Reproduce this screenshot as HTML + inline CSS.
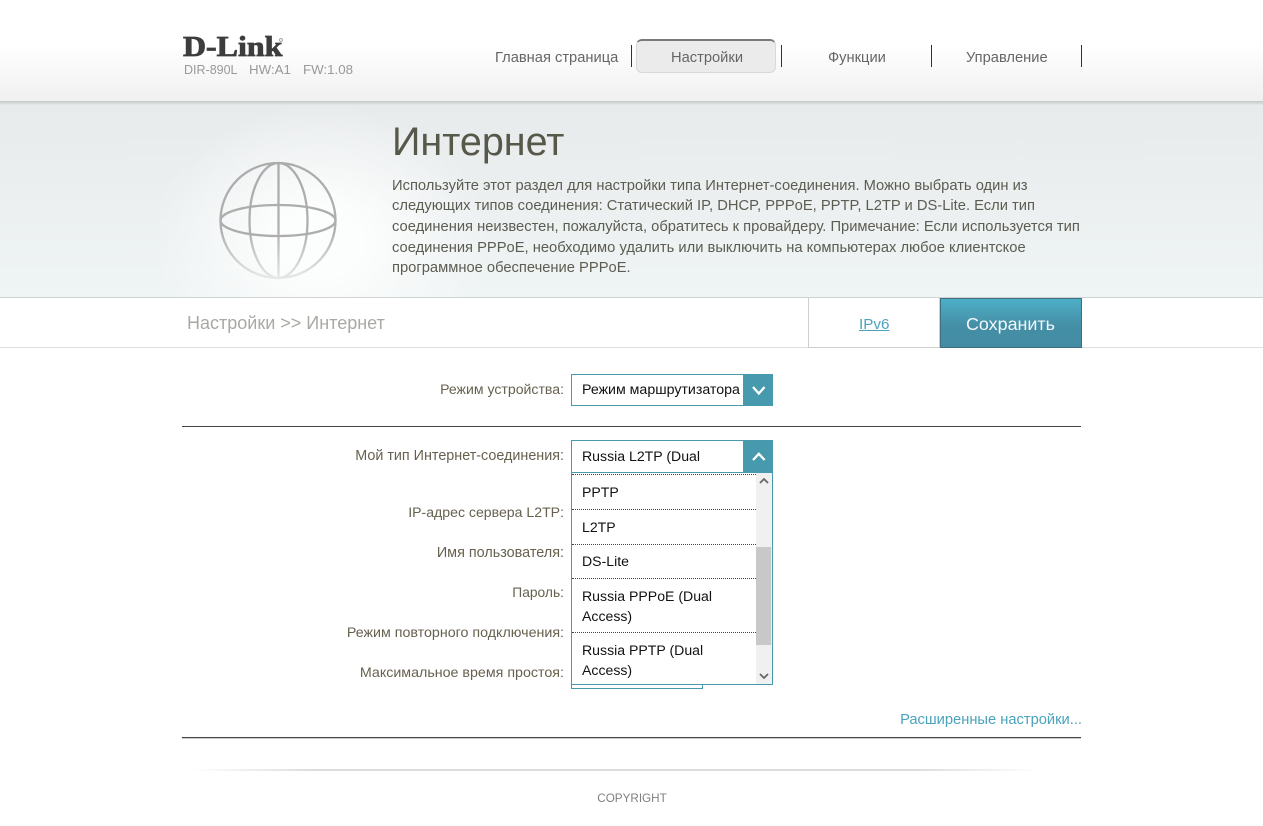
<!DOCTYPE html>
<html lang="ru"><head><meta charset="utf-8"><title>Интернет</title>
<style>
html,body{margin:0;padding:0;background:#fff}
body{width:1263px;height:826px;position:relative;overflow:hidden;font-family:"Liberation Sans",sans-serif;font-size:14px;color:#5f5f55}
.a{position:absolute;white-space:nowrap}
.nav{font-size:14.7px;color:#666;top:49px;line-height:18px}
.sep{position:absolute;top:45px;width:1px;height:22px;background:#333}
.d{left:392px;font-size:14.72px;line-height:18px;color:#5c5c52}
.l{right:699px;line-height:18px;color:#66614f}
.sel{position:absolute;left:571px;width:200px;border:1px solid #4799ad;background:#fff;box-sizing:content-box}
.arrow{position:absolute;left:743px;width:30px;background:#4799ad}
.o{position:absolute;left:582px;font-size:14.1px;line-height:20px;color:#111}
.dot{position:absolute;left:572px;width:184px;border-top:1px dotted #444;height:0}
</style></head><body>
<div class="a" style="left:0;top:0;width:1263px;height:101px;background:linear-gradient(#fff 0,#fff 45px,#f0f0f0 100%)"></div>
<div class="a" style="left:0;top:101px;width:1263px;height:4px;background:linear-gradient(#c4c8c8,#e6e9ea)"></div>
<div class="a" style="left:0;top:105px;width:1263px;height:192px;background:linear-gradient(#e8ebec,#eff4f4)"></div>
<div class="a" style="left:160px;top:105px;width:340px;height:192px;background:radial-gradient(170px 135px at 160px 135px,rgba(255,255,255,.85) 25%,rgba(255,255,255,0) 100%)"></div>
<div class="a" style="left:0;top:297px;width:1263px;height:1px;background:#cfd3d3"></div>
<div class="a" style="left:0;top:347px;width:1263px;height:1px;background:#dedede"></div>

<div class="a" style="left:183px;top:33px;font:bold 28px/30px 'Liberation Serif',serif;color:#3d3d3d;-webkit-text-stroke:.8px #3d3d3d;transform-origin:0 0;transform:scaleX(1.14)">D-Link</div>
<div class="a" style="left:279px;top:38px;width:4px;height:4px;border:1px solid #aaa;border-radius:50%;box-sizing:border-box"></div>
<div class="a" style="left:184px;top:63px;font-size:12.5px;line-height:15px;color:#999">DIR-890L</div>
<div class="a" style="left:249px;top:62px;font-size:13.3px;line-height:15px;color:#999">HW:A1</div>
<div class="a" style="left:303px;top:62px;font-size:13.3px;line-height:15px;color:#999">FW:1.08</div>

<div class="a nav" style="left:495px">Главная страница</div>
<div class="sep" style="left:631px"></div>
<div class="a" style="left:636px;top:39px;width:140px;height:34px;box-sizing:border-box;background:#ebebeb;border:1px solid #d8d8d8;border-top:2px solid #7a7a7a;border-radius:6px"></div>
<div class="a nav" style="left:671px">Настройки</div>
<div class="sep" style="left:781px"></div>
<div class="a nav" style="left:828px">Функции</div>
<div class="sep" style="left:931px"></div>
<div class="a nav" style="left:966px">Управление</div>
<div class="sep" style="left:1081px"></div>

<svg class="a" style="left:215px;top:157px" width="126" height="126" viewBox="0 0 126 126" fill="none">
<defs><linearGradient id="g" gradientUnits="userSpaceOnUse" x1="0" y1="5" x2="0" y2="122"><stop offset="0" stop-color="#ababab"/><stop offset=".6" stop-color="#b0b0b0"/><stop offset="1" stop-color="#e8e8e8"/></linearGradient>
<filter id="b" x="-5%" y="-5%" width="110%" height="110%"><feGaussianBlur stdDeviation=".35"/></filter></defs>
<g filter="url(#b)">
<g stroke="url(#g)" stroke-width="2.300">
<circle cx="63" cy="63.500" r="57.500"/>
<ellipse cx="63.500" cy="63.500" rx="29" ry="57.500"/>
<path d="M63.500 6V121"/>
</g>
<ellipse cx="63" cy="63.500" rx="57.500" ry="15.500" stroke="#adadad" stroke-width="2.300"/>
</g>
</svg>

<div class="a" style="left:392px;top:119px;font-size:39.500px;line-height:46px;color:#56584a">Интернет</div>
<div class="a d" style="top:177px">Используйте этот раздел для настройки типа Интернет-соединения. Можно выбрать один из</div>
<div class="a d" style="top:197px">следующих типов соединения: Статический IP, DHCP, PPPoE, PPTP, L2TP и DS-Lite. Если тип</div>
<div class="a d" style="top:218px">соединения неизвестен, пожалуйста, обратитесь к провайдеру. Примечание: Если используется тип</div>
<div class="a d" style="top:239px">соединения PPPoE, необходимо удалить или выключить на компьютерах любое клиентское</div>
<div class="a d" style="top:259px">программное обеспечение PPPoE.</div>

<div class="a" style="left:187px;top:313px;font-size:18px;line-height:20px;color:#a9a9a3">Настройки &gt;&gt; Интернет</div>

<div class="a" style="left:808px;top:298px;width:132px;height:50px;box-sizing:border-box;border:1px solid #cfcfcf;border-top:0;background:#fff"></div>
<div class="a" style="left:859px;top:316px;font-size:15.200px;line-height:18px;color:#4aa3bb;text-decoration:underline">IPv6</div>
<div class="a" style="left:940px;top:298px;width:142px;height:50px;box-sizing:border-box;border:1px solid #3f6f80;background:linear-gradient(#4cafc7,#458fa6 55%,#438ca3)"></div>
<div class="a" style="left:966px;top:314px;font-size:17.900px;line-height:20px;color:#f2f8fa">Сохранить</div>

<div class="a l" style="top:380px;font-size:14.100px">Режим устройства:</div>
<div class="sel" style="top:374px;height:30px"></div>
<div class="a" style="left:582px;top:381px;line-height:18px;font-size:14.200px;color:#111">Режим маршрутизатора</div>
<div class="arrow" style="top:374px;height:32px"></div>
<svg class="a" style="left:750px;top:384px" width="18" height="13" fill="none"><path d="M3 3 8.800 9.500 14.600 3" stroke="#fff" stroke-width="2.300"/></svg>

<div class="a" style="left:182px;top:426px;width:899px;height:1px;background:#444"></div>

<div class="a l" style="top:447px;font-size:14.350px">Мой тип Интернет-соединения:</div>
<div class="a l" style="top:503px;font-size:14.100px">IP-адрес сервера L2TP:</div>
<div class="a l" style="top:544px;font-size:14.400px">Имя пользователя:</div>
<div class="a l" style="top:584px;font-size:13.800px">Пароль:</div>
<div class="a l" style="top:624px;font-size:14.250px">Режим повторного подключения:</div>
<div class="a l" style="top:664px;font-size:14.250px">Максимальное время простоя:</div>

<div class="a" style="left:571px;top:680px;width:132px;height:9px;box-sizing:border-box;border:1px solid #4799ad;border-top:0"></div>
<div class="sel" style="top:440px;height:243px"></div>
<div class="a" style="left:572px;top:472px;width:200px;height:1px;background:#4799ad"></div>
<div class="a" style="left:582px;top:447px;line-height:18px;font-size:14.100px;color:#111">Russia L2TP (Dual</div>
<div class="arrow" style="top:440px;height:32px"></div>
<svg class="a" style="left:750px;top:450px" width="18" height="13" fill="none"><path d="M3 10 8.800 3.800 14.600 10" stroke="#fff" stroke-width="2.300"/></svg>

<div class="dot" style="top:474px"></div>
<div class="o" style="top:482px">PPTP</div>
<div class="dot" style="top:509px"></div>
<div class="o" style="top:517px">L2TP</div>
<div class="dot" style="top:544px"></div>
<div class="o" style="top:551px">DS-Lite</div>
<div class="dot" style="top:578px"></div>
<div class="o" style="top:586px">Russia PPPoE (Dual</div>
<div class="o" style="top:606px">Access)</div>
<div class="dot" style="top:632px"></div>
<div class="o" style="top:640px">Russia PPTP (Dual</div>
<div class="o" style="top:660px">Access)</div>

<div class="a" style="left:756px;top:473px;width:16px;height:211px;background:#f0f0f0"></div>
<div class="a" style="left:756px;top:547px;width:15px;height:98px;background:#c8c8c8"></div>
<svg class="a" style="left:758px;top:476px" width="12" height="10" fill="none"><path d="M2 7 6 3 10 7" stroke="#666" stroke-width="1.800"/></svg>
<svg class="a" style="left:758px;top:671px" width="12" height="10" fill="none"><path d="M2 3 6 7 10 3" stroke="#666" stroke-width="1.800"/></svg>

<div class="a" style="right:181px;top:711px;line-height:18px;font-size:14.700px;color:#4aa3bb">Расширенные настройки...</div>
<div class="a" style="left:182px;top:737px;width:899px;height:1px;background:#444"></div>
<div class="a" style="left:182px;top:738px;width:899px;height:1px;background:#ccc"></div>
<div class="a" style="left:190px;top:769px;width:850px;height:2px;background:linear-gradient(90deg,rgba(220,220,220,0),#dcdcdc 15%,#dcdcdc 85%,rgba(220,220,220,0))"></div>
<div class="a" style="left:0;width:1264px;text-align:center;top:791px;font-size:11.700px;line-height:15px;color:#808080">COPYRIGHT</div>
</body></html>
